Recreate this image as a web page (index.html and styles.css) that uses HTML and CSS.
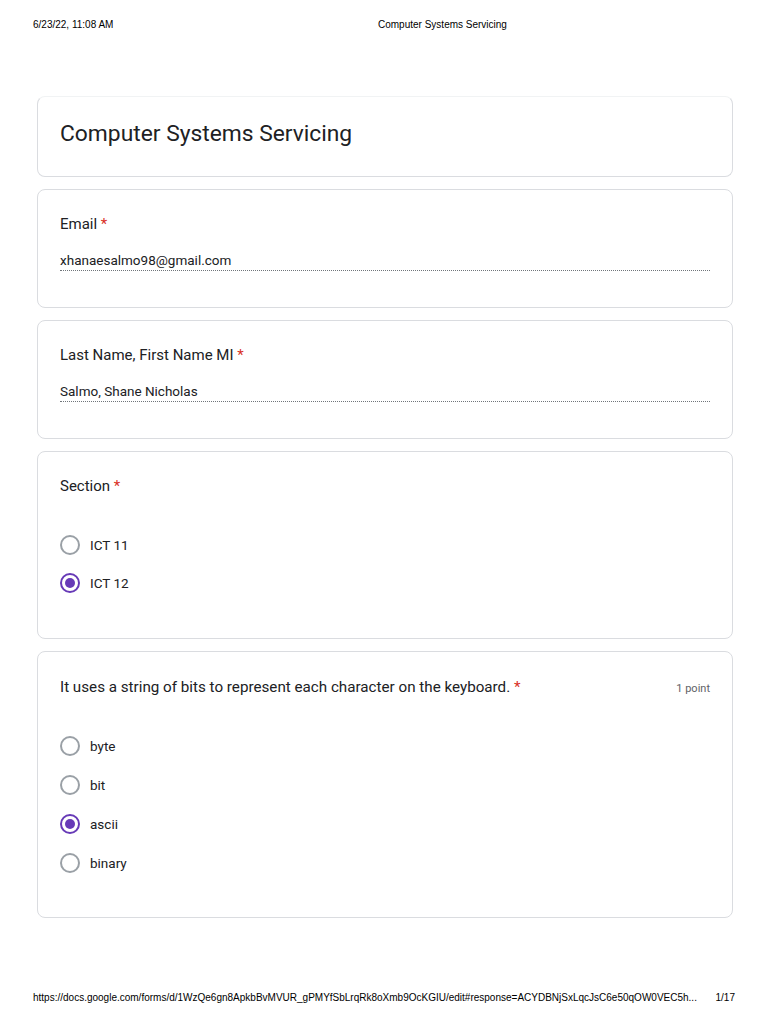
FILE: index.html
```html
<!DOCTYPE html>
<html lang="en">
<head>
  <meta charset="UTF-8" />
  <meta name="viewport" content="width=device-width, initial-scale=1.0" />
  <title>Computer Systems Servicing</title>
  <link rel="stylesheet" href="styles.css">
</head>
<body>
  <div class="print-header">
    <span>6/23/22, 11:08 AM</span>
    <span>Computer Systems Servicing</span>
  </div>

  <div class="form">
    <div class="card title-card">
      <h1>Computer Systems Servicing</h1>
    </div>

    <div class="card">
      <div class="label">Email <span class="req">*</span></div>
      <div class="answer">xhanaesalmo98@gmail.com</div>
    </div>

    <div class="card">
      <div class="label">Last Name, First Name MI <span class="req">*</span></div>
      <div class="answer">Salmo, Shane Nicholas</div>
    </div>

    <div class="card">
      <div class="label">Section <span class="req">*</span></div>
      <div class="options">
        <div class="option"><span class="radio"></span>ICT 11</div>
        <div class="option"><span class="radio checked"></span>ICT 12</div>
      </div>
    </div>

    <div class="card question">
      <div class="question-row">
        <div class="label">It uses a string of bits to represent each character on the keyboard. <span class="req">*</span></div>
        <div class="points">1 point</div>
      </div>
      <div class="options tall">
        <div class="option"><span class="radio"></span>byte</div>
        <div class="option"><span class="radio"></span>bit</div>
        <div class="option"><span class="radio checked"></span>ascii</div>
        <div class="option"><span class="radio"></span>binary</div>
      </div>
    </div>
  </div>

  <div class="print-footer">
    <span>https://docs.google.com/forms/d/1WzQe6gn8ApkbBvMVUR_gPMYfSbLrqRk8oXmb9OcKGIU/edit#response=ACYDBNjSxLqcJsC6e50qOW0VEC5h...</span>
    <span>1/17</span>
  </div>
</body>
</html>
```

FILE: styles.css
```css
body {
  margin: 0;
  height: 1024px;
  display: flex;
  flex-direction: column;
  font-family: Roboto, "Noto Sans", sans-serif;
  color: #202124;
  background: #ffffff;
}
.print-header {
  display: grid;
  grid-template-columns: 345px auto;
  padding: 19px 33px 0 33px;
  font-family: "Liberation Sans", Arial, sans-serif;
  font-size: 10px;
  line-height: 12px;
  color: #000;
}
.form {
  margin: 65px 0 0 37px;
  width: 696px;
  display: flex;
  flex-direction: column;
  gap: 12px;
}
.card {
  border: 1px solid #dadce0;
  border-radius: 8px;
  padding: 24px 22px 36px 22px;
  background: #fff;
}
.title-card {
  border-top-color: #f1f3f4;
  padding: 22px 22px 27px 22px;
}
.title-card h1 {
  margin: 0;
  font-size: 22.8px;
  font-weight: 400;
  line-height: 30px;
}
.label {
  font-size: 15px;
  line-height: 20px;
}
.question .label {
  font-size: 15.2px;
}
.req {
  color: #d93025;
}
.answer {
  margin-top: 17px;
  font-size: 13.5px;
  line-height: 19px;
  border-bottom: 1px dotted #70757a;
}
.question-row {
  display: flex;
  justify-content: space-between;
  align-items: baseline;
}
.points {
  font-size: 11px;
  color: #5f6368;
}
.options {
  margin-top: 30px;
  display: flex;
  flex-direction: column;
}
.options.tall {
  margin-top: 29px;
}
.question {
  padding-top: 25px;
  padding-bottom: 35px;
}
.option {
  display: flex;
  align-items: center;
  height: 38px;
  font-size: 13.5px;
  color: #202124;
}
.options.tall .option {
  height: 39px;
}
.radio {
  width: 16px;
  height: 16px;
  border: 2px solid #9aa0a6;
  border-radius: 50%;
  margin-right: 10px;
  display: flex;
  align-items: center;
  justify-content: center;
}
.radio.checked {
  border-color: #673ab7;
}
.radio.checked::after {
  content: "";
  width: 10px;
  height: 10px;
  border-radius: 50%;
  background: #673ab7;
}
.print-footer {
  margin-top: auto;
  display: flex;
  justify-content: space-between;
  padding: 0 33px 20px 33px;
  font-family: "Liberation Sans", Arial, sans-serif;
  font-size: 10px;
  line-height: 12px;
  color: #000;
}
```
